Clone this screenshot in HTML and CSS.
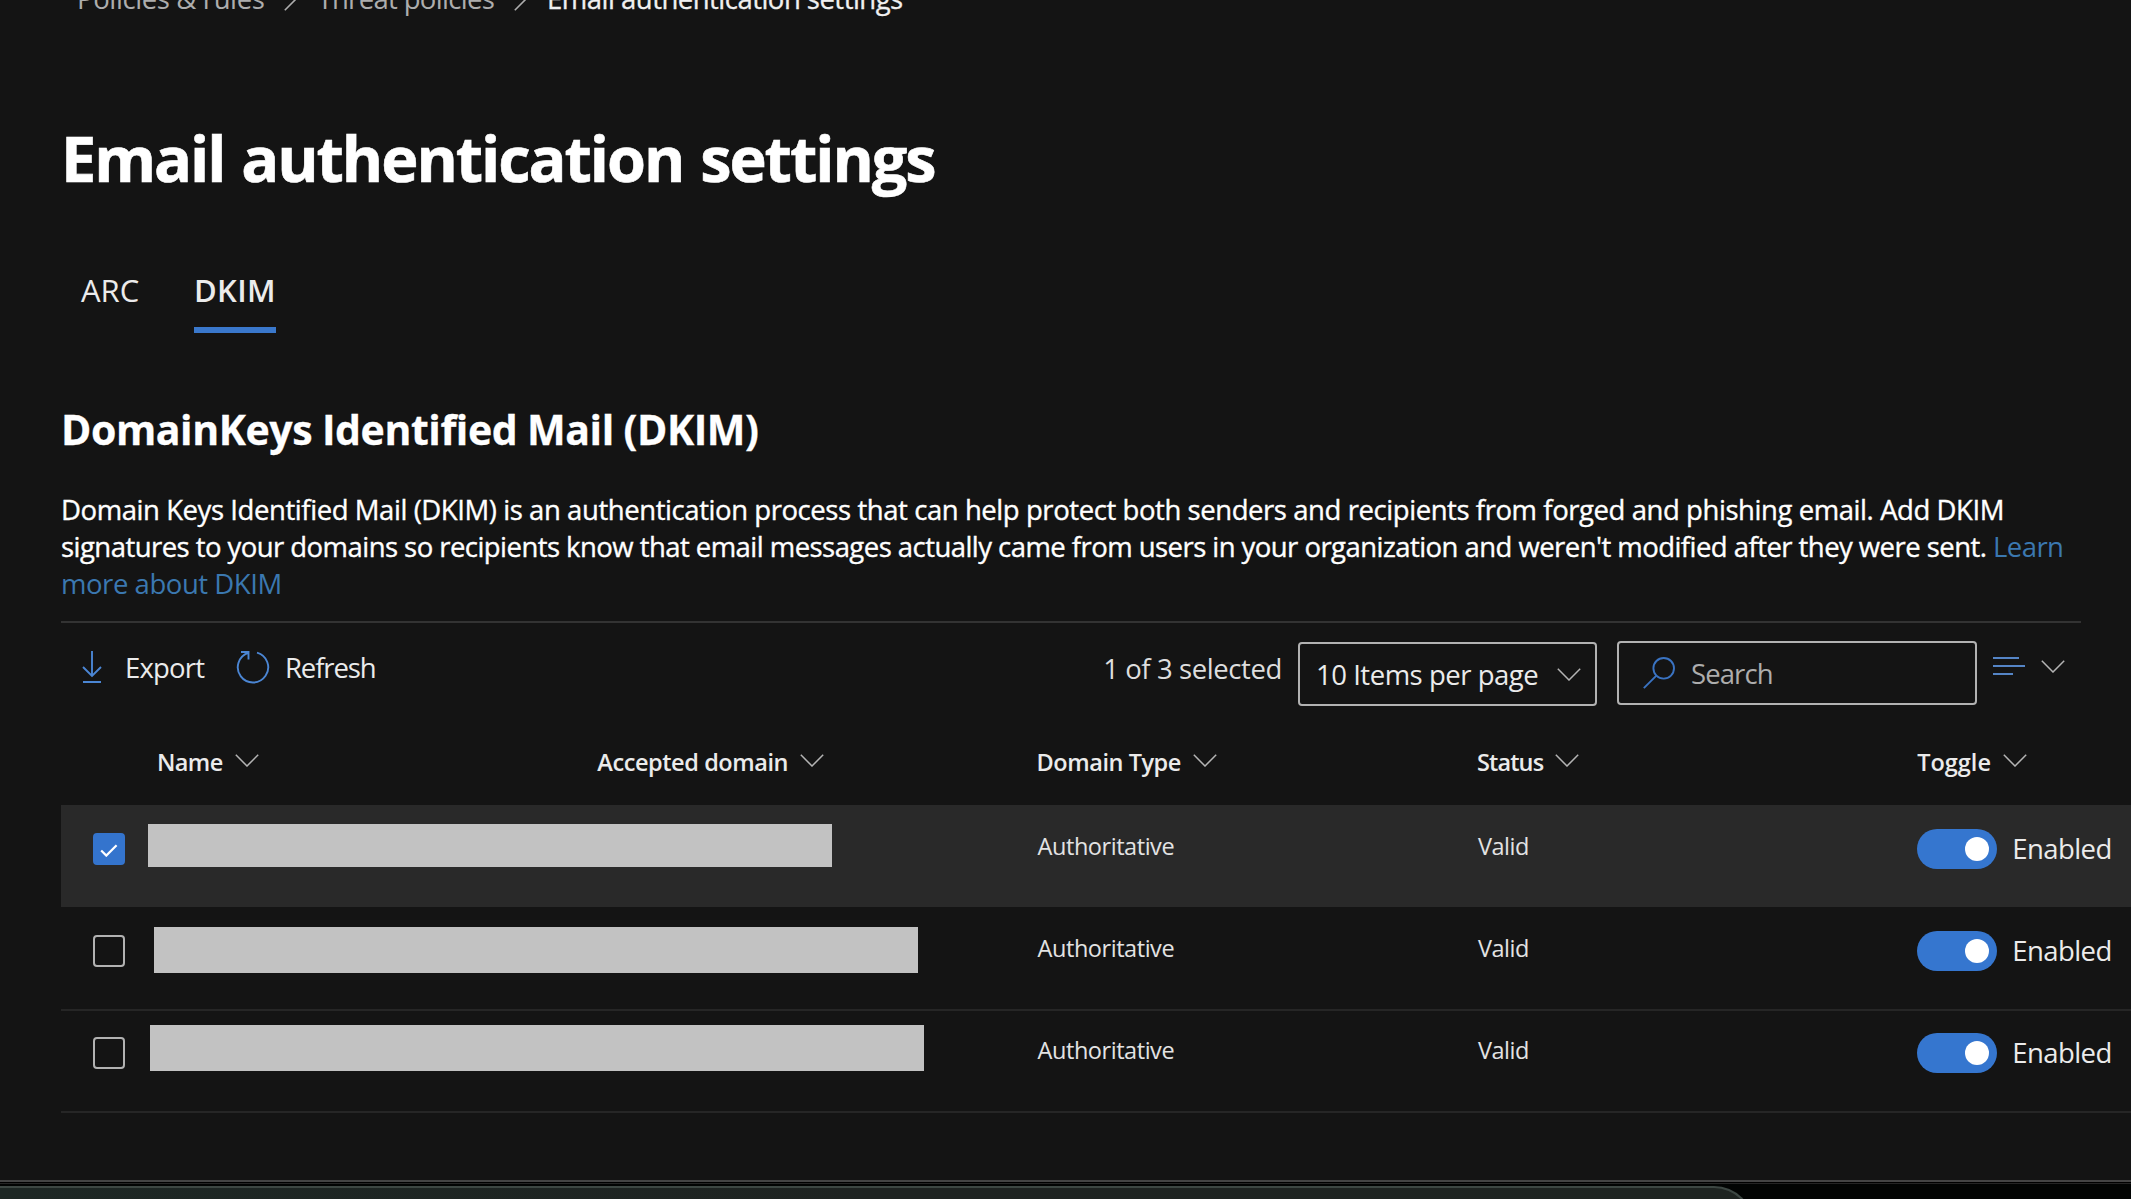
FILE: index.html
```html
<!DOCTYPE html>
<html lang="en">
<head>
<meta charset="utf-8">
<title>Email authentication settings</title>
<link rel="stylesheet" href="styles.css">
</head>
<body>
<svg class="defs" aria-hidden="true">
  <symbol id="chevron" viewBox="0 0 24 13"><path d="M.8 .8 12 12 23.2 .8"/></symbol>
  <symbol id="crumb" viewBox="0 0 13 24"><path d="M.8 .8 12 12 .8 23.2"/></symbol>
</svg>
<main class="page">
  <nav class="breadcrumb">
    <a class="crumb crumb-rules">Policies &amp; rules</a>
    <svg class="crumb-sep"><use href="#crumb"/></svg>
    <a class="crumb crumb-threat">Threat policies</a>
    <svg class="crumb-sep"><use href="#crumb"/></svg>
    <span class="crumb crumb-current">Email authentication settings</span>
  </nav>

  <h1 class="title">Email authentication settings</h1>

  <div class="tabs" role="tablist">
    <div class="tab" role="tab">ARC</div>
    <div class="tab tab-active" role="tab">DKIM</div>
  </div>

  <h2 class="subtitle">DomainKeys Identified Mail (DKIM)</h2>
  <p class="intro">
    <span class="line line-one">Domain Keys Identified Mail (DKIM) is an authentication process that can help protect both senders and recipients from forged and phishing email. Add DKIM</span>
    <span class="line line-two">signatures to your domains so recipients know that email messages actually came from users in your organization and weren't modified after they were sent. <a class="link">Learn</a></span>
    <span class="line line-three"><a class="link">more about DKIM</a></span>
  </p>

  <div class="toolbar">
    <div class="command command-export">
      <svg class="icon" viewBox="0 0 32 32"><path d="M16 0v25M7 16l9 9 9-9M7 31h18"/></svg>
      <span>Export</span>
    </div>
    <div class="command command-refresh">
      <svg class="icon" viewBox="0 0 32 32"><path d="M20 1.6A15.2 15.2 0 1 1 11.3 1.8M4 1h7.5v7.5"/></svg>
      <span>Refresh</span>
    </div>
    <span class="selected-count">1 of 3 selected</span>
    <div class="select"><span>10 Items per page</span><svg class="chevron"><use href="#chevron"/></svg></div>
    <div class="search">
      <svg class="icon" viewBox="0 0 32 32"><circle cx="20.7" cy="11.3" r="10.3"/><path d="M13.4 18.6 .8 31.2"/></svg>
      <span>Search</span>
    </div>
    <div class="filter">
      <svg class="filter-icon" viewBox="0 0 32 18"><path d="M0 1h26M0 9h32M0 17h20"/></svg>
      <svg class="chevron"><use href="#chevron"/></svg>
    </div>
  </div>

  <div class="table">
    <div class="head grid">
      <div class="column column-name"><span>Name</span><svg class="chevron"><use href="#chevron"/></svg></div>
      <div class="column column-accepted"><span>Accepted domain</span><svg class="chevron"><use href="#chevron"/></svg></div>
      <div class="column column-type"><span>Domain Type</span><svg class="chevron"><use href="#chevron"/></svg></div>
      <div class="column column-status"><span>Status</span><svg class="chevron"><use href="#chevron"/></svg></div>
      <div class="column column-toggle"><span>Toggle</span><svg class="chevron"><use href="#chevron"/></svg></div>
    </div>
    <div class="row grid row-selected">
      <div class="checkbox checkbox-on"><svg class="check" viewBox="0 0 18 13"><path d="M1.2 6.5 6.3 11.6 16.6 1.3"/></svg></div>
      <div class="names"><div class="redacted redacted-first"></div></div>
      <div class="cell">Authoritative</div>
      <div class="cell">Valid</div>
      <div class="toggle"><span class="switch"><span class="knob"></span></span><span>Enabled</span></div>
    </div>
    <div class="row grid">
      <div class="checkbox"></div>
      <div class="names"><div class="redacted redacted-second"></div></div>
      <div class="cell">Authoritative</div>
      <div class="cell">Valid</div>
      <div class="toggle"><span class="switch"><span class="knob"></span></span><span>Enabled</span></div>
    </div>
    <div class="row grid">
      <div class="checkbox"></div>
      <div class="names"><div class="redacted redacted-third"></div></div>
      <div class="cell">Authoritative</div>
      <div class="cell">Valid</div>
      <div class="toggle"><span class="switch"><span class="knob"></span></span><span>Enabled</span></div>
    </div>
  </div>
</main>
<div class="desktop"><div class="dock"></div></div>
</body>
</html>
```
FILE: styles.css
```css
* { box-sizing: border-box; }

body {
  margin: 0;
  height: 1199px;
  overflow: hidden;
  display: flex;
  flex-direction: column;
  background: #000;
  color: #ebebeb;
  font: 27.5px/38px "Open Sans", "Noto Sans", sans-serif;
  white-space: nowrap;
}

svg { fill: none; flex: none; display: block; }
.defs { position: absolute; width: 0; height: 0; }

.page {
  height: 1182px;
  flex: none;
  overflow: hidden;
  padding-left: 61px;
  background: #141414;
  border-bottom: 2px solid #444;
}

/* Breadcrumb, scrolled partly out of view */
.breadcrumb {
  display: flex;
  align-items: center;
  height: 38px;
  margin-top: -20px;
  padding-left: 16px;
  color: #adadad;
}
.crumb-sep { width: 13px; height: 24px; margin: 0 20px; stroke: #adadad; stroke-width: 1.6; }
.crumb-rules { letter-spacing: -.38px; }
.crumb-threat { letter-spacing: -.68px; }
.crumb-current { letter-spacing: -.52px; color: #f0f0f0; -webkit-text-stroke: .3px; }

.title {
  margin: 98px 0 0 0;
  font-size: 63px;
  line-height: 84px;
  font-weight: 700;
  letter-spacing: -2.05px;
  word-spacing: 2.5px;
  color: #fff;
  -webkit-text-stroke: .6px;
}

.tabs { display: flex; gap: 54px; margin-top: 69px; padding-left: 20px; font-size: 31px; line-height: 42px; }
.tab { width: 59px; height: 64px; }
.tab-active { width: 82px; font-weight: 600; letter-spacing: .35px; border-bottom: 6px solid #3a78cc; }

.subtitle { margin: 69px 0 0 0; font-size: 41px; line-height: 54px; font-weight: 700; letter-spacing: -.42px; word-spacing: -.5px; color: #fff; -webkit-text-stroke: .3px; }

.intro { margin: 35px 0 0 0; line-height: 37px; color: #fff; -webkit-text-stroke: .35px; }
.line { display: block; }
.line-one { letter-spacing: -.43px; }
.line-two { letter-spacing: -.55px; }
.line-three { letter-spacing: -.45px; }
.link { color: #3b78b0; -webkit-text-stroke: 0; }

.toolbar {
  display: flex;
  align-items: flex-start;
  width: 2020px;
  height: 85px;
  margin-top: 19px;
  padding: 18px 16px 0 15px;
  border-top: 2px solid #333;
}
.command { display: flex; gap: 17px; padding-top: 8px; }
.command-export { width: 161px; letter-spacing: -.82px; }
.command-refresh { gap: 16px; letter-spacing: -1.1px; }
.icon { width: 32px; height: 32px; stroke: #4b86d4; stroke-width: 1.9; overflow: visible; }
.command .icon { margin-top: 2px; }
.chevron { width: 24px; height: 13px; stroke: #b4b4b4; stroke-width: 1.5; }

.selected-count { margin: 9px 16px 0 auto; letter-spacing: -.4px; color: #dedede; }
.select, .search {
  display: flex;
  align-items: center;
  height: 64px;
  border: 2px solid #b2b2b2;
  border-radius: 4px;
}
.select span, .search span { padding-top: 2px; }
.select { justify-content: space-between; width: 299px; margin-top: 1px; padding: 0 14px 0 16px; letter-spacing: -.48px; }
.search { gap: 16px; width: 360px; margin-left: 20px; padding-left: 24px; letter-spacing: -.9px; color: #adadad; }
.search .icon { stroke: #3a73c2; }
.filter { display: flex; gap: 16px; margin-left: 16px; padding-top: 16px; }
.filter-icon { width: 32px; height: 18px; stroke: #5585c6; stroke-width: 2; }
.filter .chevron { margin-top: 3px; }

.grid { display: grid; grid-template-columns: 95px repeat(4, 440.3px) auto; align-items: start; }

.head { height: 99px; padding-top: 39px; font-size: 23.5px; line-height: 34px; font-weight: 600; }
.column { display: flex; gap: 12px; }
.column-name { grid-column: 2; letter-spacing: -.6px; padding-left: 1px; }
.column .chevron { margin-top: 9px; }
.column-accepted { letter-spacing: -.42px; padding-left: 1px; }
.column-type { letter-spacing: -.45px; }
.column-status { letter-spacing: -.86px; }

.row { height: 102px; box-shadow: 0 2px 0 #262626; }
.row-selected { background: #292929; box-shadow: none; }

.checkbox {
  display: flex;
  align-items: center;
  justify-content: center;
  width: 32px;
  height: 32px;
  margin: 28px 0 0 32px;
  border: 2px solid #b2b2b2;
  border-radius: 4px;
}
.checkbox-on { background: #3474cd; border-color: #3474cd; }
.check { width: 18px; height: 13px; margin-top: 3px; stroke: #fff; stroke-width: 2.2; }

.names { grid-column: span 2; }
.redacted { background: #c2c2c2; height: 46px; }
.redacted-first { width: 684px; height: 43px; margin: 19px 0 0 -8px; }
.redacted-second { width: 764px; margin: 20px 0 0 -2px; }
.redacted-third { width: 774px; margin: 16px 0 0 -6px; }

.cell { padding: 24px 0 0 1px; font-size: 23.5px; line-height: 34px; letter-spacing: -.45px; color: #e3e3e3; }

.toggle { display: flex; align-items: center; gap: 15px; padding-top: 24px; letter-spacing: -.57px; }
.switch { display: flex; flex: none; align-items: center; justify-content: flex-end; width: 80px; height: 40px; padding-right: 8px; border-radius: 20px; background: #3576cf; }
.knob { width: 24px; height: 24px; border-radius: 50%; background: #fff; }

/* Desktop edge below the window */
.desktop { flex: 1; padding-top: 4px; background: linear-gradient(#000 1px, #242424 1px, #242424 2px, #020403 2px); overflow: hidden; }
.dock {
  width: 1754px;
  height: 60px;
  border: solid #3d4743;
  border-width: 2px 2px 0 0;
  border-top-right-radius: 40px;
  background: linear-gradient(90deg, #1d2724, #1e2321 50%, #1e2421);
}
```
